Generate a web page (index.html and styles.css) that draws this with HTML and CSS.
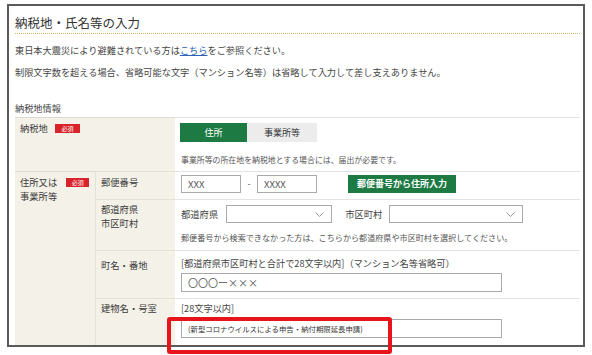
FILE: index.html
```html
<!DOCTYPE html>
<html lang="ja">
<head>
    <meta charset="UTF-8">
    <meta name="viewport" content="width=device-width, initial-scale=1.0">
    <title>納税地・氏名等の入力</title>
    <link rel="stylesheet" href="styles.css">
</head>
<body>
    <div class="page">
        <div class="frame">
            <h1 class="title">納税地・氏名等の入力</h1>

            <p class="note note-first">東日本大震災により避難されている方は<a href="#">こちら</a>をご参照ください。</p>
            <p class="note">制限文字数を超える場合、省略可能な文字（マンション名等）は省略して入力して差し支えありません。</p>

            <div class="section-label">納税地情報</div>

            <div class="form-grid">
                <!-- 納税地 -->
                <div class="cell head head-wide">納税地<span class="badge">必須</span></div>
                <div class="cell body row-place">
                    <div class="toggle">
                        <span class="toggle-btn active">住所</span>
                        <span class="toggle-btn">事業所等</span>
                    </div>
                    <p class="help help-place">事業所等の所在地を納税地とする場合には、届出が必要です。</p>
                </div>

                <!-- 住所又は事業所等 -->
                <div class="cell head head-tall">住所又は<span class="badge badge-wide">必須</span><br>事業所等</div>

                <div class="cell sub row-zip">郵便番号</div>
                <div class="cell body row-zip">
                    <div class="line">
                        <input class="text-input zip" type="text" value="XXX">
                        <span class="dash">-</span>
                        <input class="text-input zip" type="text" value="XXXX">
                        <span class="zip-btn">郵便番号から住所入力</span>
                    </div>
                </div>

                <div class="cell sub row-pref">都道府県<br>市区町村</div>
                <div class="cell body row-pref">
                    <div class="line">
                        <span class="field-label">都道府県</span>
                        <div class="select select-pref">
                            <svg width="9" height="5" viewBox="0 0 9 5"><path d="M0.5 0.5 L4.5 4.5 L8.5 0.5" fill="none" stroke="#999" stroke-width="1"/></svg>
                        </div>
                        <span class="field-label field-city">市区町村</span>
                        <div class="select select-city">
                            <svg width="9" height="5" viewBox="0 0 9 5"><path d="M0.5 0.5 L4.5 4.5 L8.5 0.5" fill="none" stroke="#999" stroke-width="1"/></svg>
                        </div>
                    </div>
                    <p class="help help-pref">郵便番号から検索できなかった方は、こちらから都道府県や市区町村を選択してください。</p>
                </div>

                <div class="cell sub row-town">町名・番地</div>
                <div class="cell body row-town">
                    <div class="hint">[都道府県市区町村と合計で28文字以内]（マンション名等省略可）</div>
                    <input class="text-input wide" type="text" value="〇〇〇ー×××">
                </div>

                <div class="cell sub row-bldg">建物名・号室</div>
                <div class="cell body row-bldg">
                    <div class="hint">[28文字以内]</div>
                    <input class="text-input wide small-text" type="text" value="(新型コロナウイルスによる申告・納付期限延長申請)">
                </div>
            </div>
        </div>

        <!-- 注目枠 -->
        <div class="highlight"></div>
    </div>
</body>
</html>
```

FILE: styles.css
```css
* {
    box-sizing: border-box;
}

body {
    margin: 0;
    background-color: #fff;
    font-family: "Noto Sans CJK JP", "Noto Sans", sans-serif;
    color: #3c3c3c;
}

.page {
    position: relative;
    width: 592px;
    height: 355px;
}

.frame {
    margin: 4px 0 0 7px;
    width: 578px;
    height: 343px;
    border: 2px solid #5a5a5a;
    padding: 0 3px 0 6px;
    overflow: hidden;
}

.title {
    margin: 0;
    padding: 8px 0 1px;
    font-size: 12.5px;
    font-weight: normal;
    line-height: 18px;
    color: #333;
    border-bottom: 1px dotted #e2b46e;
}

.note {
    margin: 8px 0 0;
    font-size: 9.2px;
    line-height: 14px;
    color: #444;
}

.note-first {
    margin-top: 9px;
}

.note a {
    color: #2a62b5;
    text-decoration: underline;
}

.section-label {
    margin-top: 22px;
    font-size: 9.2px;
    line-height: 14px;
    color: #444;
}

.form-grid {
    display: grid;
    grid-template-columns: 80px 80px 1fr;
    grid-template-rows: 54px 28px 51px 48px 48px;
    margin-top: 2px;
}

.cell {
    border-top: 1px solid #dedbd4;
    font-size: 9.3px;
    line-height: 14px;
}

.head {
    background-color: #f4f1e8;
    padding: 3px 0 0 5px;
}

.head-wide {
    grid-column: 1 / 3;
}

.head-tall {
    grid-column: 1;
    grid-row: 2 / 6;
}

.sub {
    background-color: #f4f1e8;
    border-left: 1px solid #e6e1d5;
    border-top-color: #e6e1d5;
    padding-left: 5px;
}

.body {
    background-color: #fff;
    border-top-color: #e2e2e2;
    padding-left: 6px;
}

.badge {
    display: inline-block;
    margin-left: 7px;
    width: 25px;
    height: 9px;
    background-color: #d8232a;
    color: #fff;
    font-size: 6px;
    line-height: 9px;
    text-align: center;
    vertical-align: 1px;
}

.badge-wide {
    margin-left: 9px;
    width: 23px;
}

/* 納税地 */
.row-place {
    padding-top: 5px;
}

.toggle {
    display: flex;
    margin-left: -1px;
}

.toggle-btn {
    width: 70px;
    height: 19px;
    background-color: #ececec;
    font-size: 9px;
    line-height: 19px;
    text-align: center;
    color: #333;
}

.toggle-btn.active {
    width: 67px;
    background-color: #1d7a43;
    color: #fff;
}

.help {
    margin: 0;
    font-size: 7.9px;
    line-height: 12px;
    color: #555;
}

.help-place {
    margin-top: 12px;
}

.help-pref {
    margin-top: 9px;
    font-size: 8.1px;
}

/* 郵便番号 */
.sub.row-zip,
.head-tall {
    padding-top: 3px;
}

.body.row-zip {
    padding-top: 3px;
}

.line {
    display: flex;
    align-items: center;
}

.text-input {
    display: block;
    height: 18px;
    margin: 0;
    padding: 0 6px;
    border: 1px solid #a9a9a9;
    border-radius: 0;
    background: #fff;
    font-family: "Noto Sans CJK JP", "Noto Sans", sans-serif;
    font-size: 9.5px;
    color: #555;
    outline: none;
}

.zip {
    width: 60px;
}

.dash {
    width: 16px;
    text-align: center;
    font-size: 9px;
    color: #555;
}

.zip-btn {
    margin-left: 31px;
    width: 108px;
    height: 18px;
    background-color: #1d7a43;
    color: #fff;
    font-size: 9px;
    font-weight: bold;
    line-height: 18px;
    text-align: center;
}

/* 都道府県・市区町村 */
.sub.row-pref {
    padding-top: 2px;
}

.body.row-pref {
    padding-top: 5px;
}

.field-label {
    font-size: 9.3px;
    color: #444;
}

.field-city {
    margin-left: 13px;
}

.select {
    display: flex;
    align-items: center;
    justify-content: flex-end;
    height: 18px;
    margin-left: 8px;
    padding-right: 7px;
    border: 1px solid #a9a9a9;
    background: #fff;
}

.select-pref {
    width: 106px;
}

.select-city {
    margin-left: 7px;
    width: 134px;
}

/* 町名・番地 / 建物名・号室 */
.sub.row-town {
    padding-top: 7px;
}

.body.row-town {
    padding-top: 5px;
}

.sub.row-bldg {
    padding-top: 2px;
}

.body.row-bldg {
    padding-top: 2px;
}

.hint {
    font-size: 9.2px;
    line-height: 14px;
    color: #444;
}

.wide {
    width: 321px;
    height: 19px;
    margin-top: 3px;
    font-size: 10px;
}

.row-bldg .wide {
    margin-top: 4px;
}

.small-text {
    font-size: 7.4px;
    color: #333;
}

.highlight {
    position: absolute;
    left: 167px;
    top: 313px;
    width: 225px;
    height: 37px;
    border: 4px solid #e8141c;
    border-radius: 3px;
}
```
